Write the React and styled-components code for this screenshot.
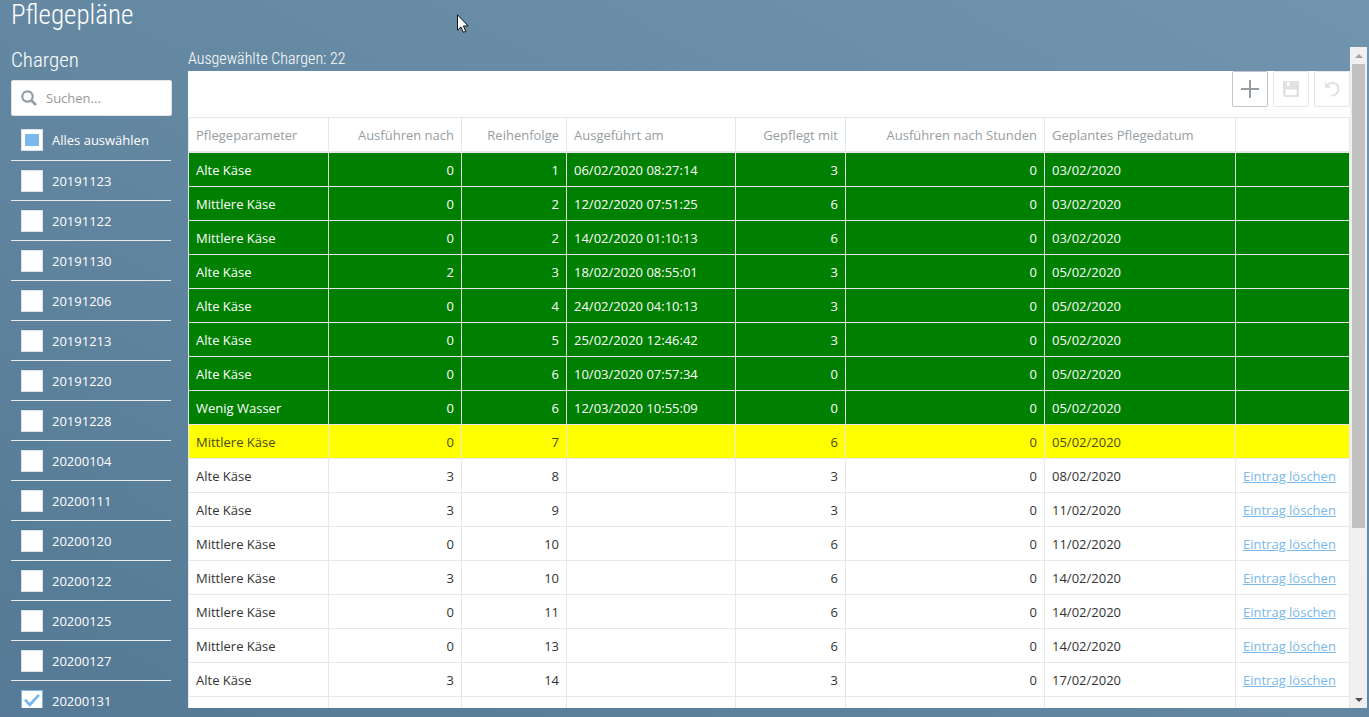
import { useEffect, useRef, useState } from "react";
import styled, { createGlobalStyle } from "styled-components";

const GlobalStyle = createGlobalStyle`
* {
    box-sizing: border-box;
}

body {
    margin: 0;
    overflow: hidden;
    font-family: "Open Sans", "Noto Sans", sans-serif;
    font-size: 13px;
    line-height: 20px;
    color: #333;
}
`;

const Page = styled.div`
    display: flex;
    flex-direction: column;
    height: 100vh;
    padding: 0 2px 9px 11px;
    background: linear-gradient(to top right, #567a97 0%, #577c97 10%, #6488a2 50%, #7295af 100%);
`;

const Title = styled.h1`
    margin: 0;
    height: 47px;
    font-family: "Roboto Condensed", "Liberation Sans Narrow", Roboto, sans-serif;
    font-size: 27px;
    font-weight: 300;
    line-height: 30px;
    color: #fff;
`;

const Columns = styled.div`
    display: flex;
    flex: 1;
    min-height: 0;
    gap: 16px;
`;

const Sidebar = styled.aside`
    flex: 0 0 161px;
    overflow: hidden;
`;

const SidebarTitle = styled.h2`
    margin: 0;
    height: 33px;
    font-family: "Roboto Condensed", "Liberation Sans Narrow", Roboto, sans-serif;
    font-size: 21px;
    font-weight: 300;
    line-height: 26px;
    color: #fff;
`;

const SearchBox = styled.label`
    display: flex;
    align-items: center;
    gap: 9px;
    height: 36px;
    padding: 0 9px;
    background: #fff;
    border: 1px solid #e0e4e8;
    border-radius: 2px;

    input {
        flex: 1;
        min-width: 0;
        padding: 0;
        border: none;
        outline: none;
        font: inherit;
    }

    input::placeholder {
        color: #999;
    }
`;

const BatchList = styled.ul`
    margin: 0 1px 0 0;
    padding: 4px 0 0;
    list-style: none;
`;

const BatchItem = styled.li`
    border-bottom: 1px solid #e8ecef;

    label {
        display: flex;
        align-items: center;
        gap: 9px;
        height: 39px;
        padding-left: 10px;
        font-weight: 500;
        color: #fff;
    }

    &:first-child label {
        height: 40px;
    }
`;

const Checkbox = styled.input`
    appearance: none;
    display: grid;
    place-items: center;
    width: 22px;
    height: 22px;
    margin: 0;
    background: #fff;
    border: 1px solid #dde2e6;

    &:checked {
        border-color: #7cb8eb;
    }

    &:indeterminate::after {
        content: "";
        width: 14px;
        height: 12px;
        background: #7ab8eb;
    }

    &:checked::after {
        content: "";
        width: 16px;
        height: 13px;
        background: #7ab8eb;
        clip-path: polygon(0 50%, 13% 37%, 35% 68%, 88% 0, 100% 13%, 36% 100%);
    }
`;

const Main = styled.main`
    display: flex;
    flex: 1;
    min-width: 0;
`;

const Content = styled.div`
    flex: 1;
    min-width: 0;
    overflow: hidden;
    background: linear-gradient(#fff, #fff) 0 24px no-repeat;
`;

const Selected = styled.div`
    height: 24px;
    font-family: "Roboto Condensed", "Liberation Sans Narrow", Roboto, sans-serif;
    font-size: 16px;
    font-weight: 300;
    line-height: 24px;
    color: #fff;
`;

const Toolbar = styled.div`
    display: flex;
    justify-content: flex-end;
    gap: 5px;
    height: 46px;
`;

const ToolButton = styled.button`
    display: grid;
    place-items: center;
    width: 36px;
    height: 36px;
    padding: 0;
    color: #959da3;
    background: #fff;
    border: 1px solid #bfc5ca;
    border-radius: 2px;

    &:disabled {
        color: #dfe1e3;
        border-color: #e5e7e9;
    }
`;

const Table = styled.table`
    width: 100%;
    table-layout: fixed;
    border-collapse: separate;
    border-spacing: 0;
    border-left: 1px solid #e6e7e9;
    border-top: 1px solid #e6e7e9;
    white-space: nowrap;
`;

const Cell = styled.td`
    height: 34px;
    padding: 0 7px;
    text-align: ${(props) => (props.$right ? "right" : "left")};
    border-right: 1px solid #e6e7e9;
    border-bottom: 1px solid #e6e7e9;
`;

const HeadCell = styled(Cell)`
    height: 35px;
    font-weight: 400;
    color: #979da2;
    border-bottom-width: 2px;
`;

const rowColors = {
    done: { background: "#008000", text: "#fff", weight: 500 },
    due: { background: "#ffff00", text: "#4a4a1c", weight: 400 },
    open: { background: "#fff", text: "#333", weight: 400 },
};

const Row = styled.tr`
    background: ${(props) => rowColors[props.$state].background};
    color: ${(props) => rowColors[props.$state].text};
    font-weight: ${(props) => rowColors[props.$state].weight};
`;

const DeleteLink = styled.a`
    color: #7ab8eb;
    text-decoration: underline;
`;

const ScrollBar = styled.div`
    display: flex;
    flex-direction: column;
    flex: 0 0 17px;
    background: #f0f0f0;
`;

const ScrollArrow = styled.div`
    display: grid;
    place-items: center;
    height: 17px;
    color: ${(props) => (props.$dim ? "#a3a3a3" : "#505050")};
`;

const ScrollTrack = styled.div`
    flex: 1;
    padding: 0 2px;
`;

const ScrollThumb = styled.div`
    height: 74%;
    background: #c1c1c1;
`;

const Pointer = styled.svg`
    position: absolute;
    left: 457px;
    top: 14px;
`;

const batches = [
    "20191123", "20191122", "20191130", "20191206", "20191213", "20191220", "20191228",
    "20200104", "20200111", "20200120", "20200122", "20200125", "20200127", "20200131",
];

const columns = [
    { title: "Pflegeparameter", width: 140 },
    { title: "Ausführen nach", width: 133, right: true },
    { title: "Reihenfolge", width: 105, right: true },
    { title: "Ausgeführt am", width: 169 },
    { title: "Gepflegt mit", width: 110, right: true },
    { title: "Ausführen nach Stunden", width: 199, right: true },
    { title: "Geplantes Pflegedatum" },
    { title: "", width: 114 },
];

const rows = [
    ["done", "Alte Käse", 0, 1, "06/02/2020 08:27:14", 3, 0, "03/02/2020"],
    ["done", "Mittlere Käse", 0, 2, "12/02/2020 07:51:25", 6, 0, "03/02/2020"],
    ["done", "Mittlere Käse", 0, 2, "14/02/2020 01:10:13", 6, 0, "03/02/2020"],
    ["done", "Alte Käse", 2, 3, "18/02/2020 08:55:01", 3, 0, "05/02/2020"],
    ["done", "Alte Käse", 0, 4, "24/02/2020 04:10:13", 3, 0, "05/02/2020"],
    ["done", "Alte Käse", 0, 5, "25/02/2020 12:46:42", 3, 0, "05/02/2020"],
    ["done", "Alte Käse", 0, 6, "10/03/2020 07:57:34", 0, 0, "05/02/2020"],
    ["done", "Wenig Wasser", 0, 6, "12/03/2020 10:55:09", 0, 0, "05/02/2020"],
    ["due", "Mittlere Käse", 0, 7, "", 6, 0, "05/02/2020"],
    ["open", "Alte Käse", 3, 8, "", 3, 0, "08/02/2020"],
    ["open", "Alte Käse", 3, 9, "", 3, 0, "11/02/2020"],
    ["open", "Mittlere Käse", 0, 10, "", 6, 0, "11/02/2020"],
    ["open", "Mittlere Käse", 3, 10, "", 6, 0, "14/02/2020"],
    ["open", "Mittlere Käse", 0, 11, "", 6, 0, "14/02/2020"],
    ["open", "Mittlere Käse", 0, 13, "", 6, 0, "14/02/2020"],
    ["open", "Alte Käse", 3, 14, "", 3, 0, "17/02/2020"],
    ["open", "", "", "", "", "", "", ""],
];

function SelectAll() {
    const ref = useRef(null);

    useEffect(() => {
        ref.current.indeterminate = true;
    }, []);

    return (
        <BatchItem>
            <label><Checkbox type="checkbox" ref={ref} />Alles auswählen</label>
        </BatchItem>
    );
}

function BatchPanel() {
    const [selected, setSelected] = useState(["20200131"]);

    const toggle = (batch) => {
        setSelected(selected.includes(batch) ? selected.filter((b) => b !== batch) : [...selected, batch]);
    };

    return (
        <Sidebar>
            <SidebarTitle>Chargen</SidebarTitle>
            <SearchBox>
                <svg width="16" height="16" viewBox="0 0 16 16" fill="none" stroke="#959da3">
                    <circle cx="6.5" cy="6.5" r="5.2" strokeWidth="2.2" />
                    <path d="M10.3 10.3L15 15" strokeWidth="2.6" />
                </svg>
                <input type="text" placeholder="Suchen..." aria-label="Suchen" />
            </SearchBox>
            <BatchList>
                <SelectAll />
                {batches.map((batch) => (
                    <BatchItem key={batch}>
                        <label>
                            <Checkbox type="checkbox" checked={selected.includes(batch)} onChange={() => toggle(batch)} />
                            {batch}
                        </label>
                    </BatchItem>
                ))}
            </BatchList>
        </Sidebar>
    );
}

function CareTable() {
    return (
        <Table>
            <colgroup>
                {columns.map((column, i) => <col key={i} width={column.width} />)}
            </colgroup>
            <thead>
                <tr>
                    {columns.map((column, i) => (
                        <HeadCell as="th" key={i} $right={column.right}>{column.title}</HeadCell>
                    ))}
                </tr>
            </thead>
            <tbody>
                {rows.map(([state, ...values], r) => (
                    <Row key={r} $state={state}>
                        {values.map((value, i) => (
                            <Cell key={i} $right={columns[i].right}>{value}</Cell>
                        ))}
                        <Cell>{state === "open" && values[0] && <DeleteLink href="#">Eintrag löschen</DeleteLink>}</Cell>
                    </Row>
                ))}
            </tbody>
        </Table>
    );
}

function App() {
    return (
        <Page>
            <GlobalStyle />
            <Title>Pflegepläne</Title>
            <Columns>
                <BatchPanel />
                <Main>
                    <Content>
                        <Selected>Ausgewählte Chargen: 22</Selected>
                        <Toolbar>
                            <ToolButton aria-label="Hinzufügen">
                                <svg width="18" height="18" viewBox="0 0 18 18" fill="currentColor">
                                    <path d="M8 0h2v8h8v2h-8v8H8v-8H0V8h8z" />
                                </svg>
                            </ToolButton>
                            <ToolButton aria-label="Speichern" disabled>
                                <svg width="16" height="16" viewBox="0 0 16 16" fill="currentColor" fillRule="evenodd">
                                    <path d="M0 0h16v16H2l-2-2zM4 1v4h2.5V1zM2.500 8.500v5.500h11V8.500z" />
                                </svg>
                            </ToolButton>
                            <ToolButton aria-label="Rückgängig" disabled>
                                <svg width="16" height="16" viewBox="0 0 16 16" fill="none" stroke="currentColor">
                                    <path d="M3 4.500C6.500 .2 14.300 1.200 14.300 8c0 4.300-3.300 6.600-6.800 6.600" strokeWidth="2" />
                                    <path d="M1 .8v6h6z" fill="currentColor" stroke="none" />
                                </svg>
                            </ToolButton>
                        </Toolbar>
                        <CareTable />
                    </Content>
                    <ScrollBar>
                        <ScrollArrow $dim>
                            <svg width="8" height="4" viewBox="0 0 8 4" fill="currentColor"><path d="M0 4L4 0l4 4z" /></svg>
                        </ScrollArrow>
                        <ScrollTrack>
                            <ScrollThumb />
                        </ScrollTrack>
                        <ScrollArrow>
                            <svg width="8" height="4" viewBox="0 0 8 4" fill="currentColor"><path d="M0 0h8L4 4z" /></svg>
                        </ScrollArrow>
                    </ScrollBar>
                </Main>
            </Columns>
            <Pointer width="12" height="19" viewBox="0 0 12 19" fill="#fff" stroke="#111" strokeWidth="1">
                <path d="M.5 .8v15.400l3.500-3.300 2.400 5.400 2.400-1-2.400-5.300h4.800z" />
            </Pointer>
        </Page>
    );
}

export default App;
